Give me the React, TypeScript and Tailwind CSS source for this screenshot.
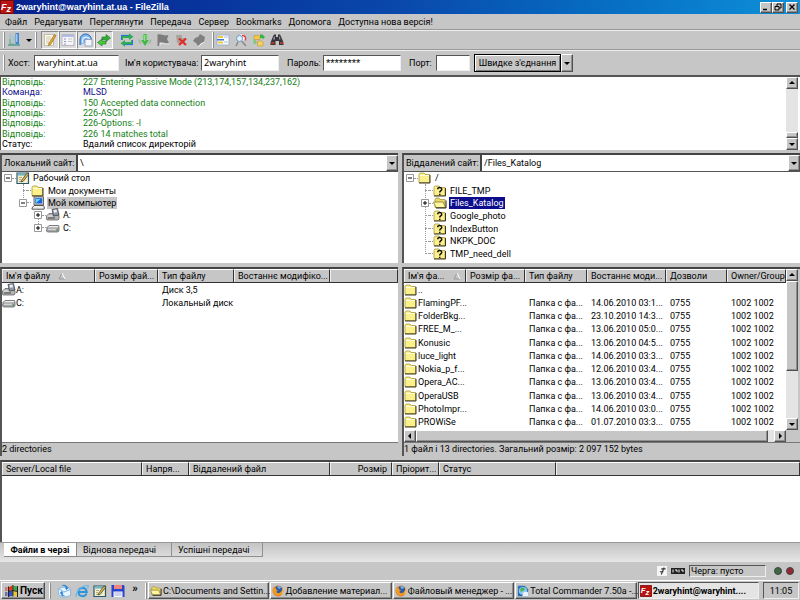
import type { ReactNode } from "react";

const raised =
  "border border-t-white border-l-white border-b-[#505050] border-r-[#505050] shadow-[inset_-1px_-1px_0_#909090] bg-[#c6c6c6]";
const sunken = "border border-t-[#555] border-l-[#555] border-b-[#eee] border-r-[#eee]";
const panel = "border-t-2 border-l-2 border-t-[#444] border-l-[#555]";

/* ---------- icons ---------- */

function Icon({ children, size = "size-3.5" }: { children: ReactNode; size?: string }) {
  return (
    <svg viewBox="0 0 14 14" className={size + " shrink-0"} aria-hidden="true">
      {children}
    </svg>
  );
}

function Folder() {
  return (
    <Icon>
      <path d="M1 3.5 2 2h4l1 1.5h4.5v8H1z" fill="#fbf08c" stroke="#a89838" strokeWidth=".8" />
      <path d="M2 4.5h9" stroke="#fffde0" />
      <path d="M1 12h11V4" fill="none" stroke="#3c3820" strokeWidth="1" />
    </Icon>
  );
}

function OpenFolder() {
  return (
    <Icon>
      <path d="M2 3.5 3 2h3l1 1.5h5v8H2z" fill="#e8d868" stroke="#a89838" strokeWidth=".8" />
      <path d="M.5 6h9.5l2.5 5.5H3z" fill="#fdf6a4" stroke="#8c7c28" strokeWidth=".8" />
      <path d="M3 12h10V4.5" fill="none" stroke="#222" />
    </Icon>
  );
}

function UnknownFolder() {
  return (
    <Icon>
      <path d="M1 3.5 2 2h4l1 1.5h5v8H1z" fill="#fbf08c" stroke="#a89838" strokeWidth=".8" />
      <path d="M1 12h11.5V4" fill="none" stroke="#3c3820" />
      <path d="M4.7 5.2c0-2.4 4.2-2.2 4 .2 0 1.5-2 1.6-2 3" fill="none" stroke="#111" strokeWidth="1.5" />
      <path d="M6 9.7h1.5v1.4H6z" fill="#111" />
    </Icon>
  );
}

function Drive() {
  return (
    <Icon>
      <path d="M1 6.5 3 4.5h9.5L13 6v3.5L12 11H1.5L.5 10z" fill="#a9a9a9" stroke="#555" strokeWidth=".7" />
      <path d="M2 6.3 3.3 5h9L12 6.3z" fill="#eee" />
      <path d="M2 8.3h8" stroke="#ddd" />
      <path d="M10.5 9H12" stroke="#2c8a2c" />
    </Icon>
  );
}

function Floppy35() {
  return (
    <Icon>
      <path d="M.5 8 3 5.5h9L13 8v3l-1 1H1l-.5-1z" fill="#b4b4b4" stroke="#555" strokeWidth=".7" />
      <path d="M1.5 8h5" stroke="#eee" />
      <path d="M2 10h7" stroke="#444" />
      <path d="M6 1.5 11.5.5 13 7 7.5 8z" fill="#8c98a8" stroke="#333" strokeWidth=".7" />
      <path d="m7.5 2 3-.5.5 2.8-3 .5z" fill="#eef" />
    </Icon>
  );
}

function Computer() {
  return (
    <Icon>
      <path d="M3 .8h9.5V9H3z" fill="#d8d8d8" stroke="#444" strokeWidth=".8" />
      <path d="M4.3 2.2h7v5.3h-7z" fill="#1668d8" />
      <path d="M5 3h4.5L5 7z" fill="#69d4ff" />
      <path d="m1 12 2-2.5h9.5l1 2.5-.5 1.2H1z" fill="#eee" stroke="#333" strokeWidth=".8" />
    </Icon>
  );
}

function Desktop() {
  return (
    <Icon>
      <path d="M1 2h11.5v10.5H1z" fill="#f4efcd" stroke="#28566c" strokeWidth="1.2" />
      <path d="M1.6 2.6h10.3v2H1.6z" fill="#6eb6c8" />
      <path d="M3 6.5h3M3 8.5h2M3 10.5h4" stroke="#9a9a70" strokeWidth=".8" />
      <path d="M5.5 9.5 11 2l1.8 1.2L7.5 10 5 11z" fill="#e8b93c" stroke="#333" strokeWidth=".7" />
    </Icon>
  );
}

function FzLogo() {
  return (
    <Icon>
      <path d="M.5.5h13v13H.5z" fill="#b81414" stroke="#7c0808" />
      <text x="1" y="9.5" fill="#fff" fontSize="9" fontWeight="700" fontStyle="italic" fontFamily="Liberation Sans, sans-serif">
        F<tspan dy="2">z</tspan>
      </text>
    </Icon>
  );
}

function SiteManager() {
  return (
    <Icon>
      <path d="M2 1h2.5v9H2zM5.5 3H8v7H5.5z" fill="#a8c4cc" />
      <path d="M8.5 0H12v11H8.5z" fill="#3f83cf" />
      <path d="M9.2 1h1.2v8H9.2z" fill="#b4dcfa" />
      <path d="M1 12h12" stroke="#4c9c90" strokeWidth="1.5" />
      <path d="M3 6v5h4" stroke="#72a87c" fill="none" />
    </Icon>
  );
}

function LogToggle() {
  return (
    <Icon>
      <path d="M1.5 1.5h9v11h-9z" fill="#fffce8" stroke="#b4b096" strokeWidth=".8" />
      <path d="M3 4h5M3 6h5M3 8h3M3 10h3" stroke="#b0b0a0" strokeWidth=".7" />
      <path d="m6 10 5.5-8.5 1.5 1L8 11l-2.5 1.5z" fill="#e9a92c" stroke="#8c6018" strokeWidth=".6" />
    </Icon>
  );
}

function TreeToggle() {
  return (
    <Icon>
      <path d="M1 1.5h12v11H1z" fill="#f6f6fa" stroke="#a8a8b4" strokeWidth=".8" />
      <path d="M1 2h12v2H1z" fill="#b4bce4" />
      <path d="M3 6h2M3 8.5h2M3 11h2" stroke="#8c94b4" />
      <path d="M7 6h4M7 8.5h4" stroke="#c4c4cc" />
    </Icon>
  );
}

function RemoteToggle() {
  return (
    <Icon>
      <path d="M1 12V7c0-8 11-8 11.5 0" fill="#7cb4ec" stroke="#2860b0" />
      <path d="M3.5 10V7c.5-3 5-4 7-1" fill="none" stroke="#d4ecff" strokeWidth="1.5" />
      <path d="M6 6.5h7V13H6z" fill="#f2f4fa" stroke="#8898b8" strokeWidth=".8" />
    </Icon>
  );
}

function QueueToggle() {
  return (
    <Icon>
      <path d="M5 4h4V1.5L13.5 5 9 8.5v-2H5z" fill="#30b034" stroke="#187020" strokeWidth=".6" />
      <path d="M9 8H5V6L.5 9.5 5 13v-2h4z" fill="#4cc83c" stroke="#187020" strokeWidth=".6" />
    </Icon>
  );
}

function Refresh() {
  return (
    <Icon>
      <path d="M1 2h8V.3l4.5 3.4L9 7V5H3v2H1z" fill="#2cae52" />
      <path d="M13 12H5v1.7L.5 10.3 5 7v2h6V7h2z" fill="#2cae52" />
      <path d="M1 2.4h8M1.5 2v5M13 11.6H5M12.5 12V7" stroke="#2874dc" fill="none" />
    </Icon>
  );
}

function ProcessQueue() {
  return (
    <Icon>
      <path d="M3.5 2 5 1v5H3zM9 1l1.5 1L11 6H9z" fill="#a4d4a4" />
      <path d="M5.5 1h3v6H11l-4 6-4-6h2.5z" fill="#44b844" />
      <path d="M.8 5.5 4 12l-3-3zM13.2 5.5 10 12l3-3z" fill="#88b488" />
      <path d="M6.3 2h1v6h-1z" fill="#b4ecac" />
    </Icon>
  );
}

function Flag() {
  return (
    <Icon>
      <path d="M1.5 1.5c4-1 6 2 11 .5L11 6l2 4c-4 1.5-6-1.5-9.5-.5V13h-2z" fill="#7c7c7c" />
      <path d="M4 13v-2.5c3-1 6 1.5 9.5.2" stroke="#eee" fill="none" strokeWidth=".8" />
    </Icon>
  );
}

function Disconnect() {
  return (
    <Icon>
      <path d="M2 2h6v3h3v5H3z" fill="#a8a49c" />
      <path d="m5 5.5 7 6.5M12 5.5 5 12" stroke="#e22c2c" strokeWidth="2.3" />
    </Icon>
  );
}

function Reconnect() {
  return (
    <Icon>
      <path d="M8 1 13 4l-1 5-3 1-3 3-2-3-3-2 2-3 3-1z" fill="#808080" />
      <path d="M12.5 9 9 11l-2.5 3" stroke="#eee" fill="none" />
    </Icon>
  );
}

function Filter() {
  return (
    <Icon>
      <path d="M1 2h12v10H1z" fill="#fbfbfb" stroke="#90a8cc" strokeWidth=".8" />
      <path d="M2 3h5v2H2zM2 8.5h5v2H2z" fill="#f3c93c" />
      <path d="M1 6h7v1.5H1z" fill="#3c78d4" />
      <path d="M8 4h4M8 9h4" stroke="#a4c4ec" />
    </Icon>
  );
}

function Compare() {
  return (
    <Icon>
      <path d="M5 1h5l2 3v4H5z" fill="#f2f2f8" stroke="#a8a8b0" strokeWidth=".6" />
      <circle cx="5.5" cy="5.5" r="3" fill="#e2f0fc" stroke="#6898c0" />
      <path d="M8 8.5 12 13M4 9l-2 4" stroke="#888" strokeWidth="1.5" />
      <path d="M8 2.5c4 0 4 3 3 5" fill="none" stroke="#dc3a3a" strokeWidth="1.3" />
    </Icon>
  );
}

function SyncBrowse() {
  return (
    <Icon>
      <path d="M2 2.5h5l1 1v3H2z" fill="#f4c848" stroke="#b88820" strokeWidth=".5" />
      <path d="M5.5 8H10l1 1v4H5.5z" fill="#f4d060" stroke="#b88820" strokeWidth=".5" />
      <path d="M8 1.5h2.5L13 4l-2.5 2.5V5H8z" fill="#34b440" />
      <path d="M1.5 6.5H4V9h1.2L3 11.5.5 9h1z" fill="#7cc884" />
    </Icon>
  );
}

function Binoculars() {
  return (
    <Icon>
      <path d="M4 1.5h2V4h2V1.5h2l1 2 2.5 6V12H9V8H5.5v4H.5V9.5L3 3.5z" fill="#383438" />
      <path d="M1.3 9h3v2h-3zM10 9h3v2h-3z" fill="#b03c30" />
      <path d="M4 3.5h1v3H3zM9 3.5h1l.5 3H9z" fill="#8890a8" />
    </Icon>
  );
}

function WindowsFlag() {
  return (
    <Icon>
      <path d="m5 3 3.5-1.5V6L5 7z" fill="#e03c24" />
      <path d="m9.2 1.8 4.3.7V7l-4.3-1z" fill="#3ca43c" />
      <path d="M5 7.7 8.5 7v5l-3.5.5z" fill="#2c50d0" />
      <path d="m9.2 7 4.3.7v4.8L9.2 12z" fill="#ecc62c" />
      <path d="M4.5 2.5V13M8.9 1v11.5M13.5 2v11M4.5 7.4l4.4-.8 4.6.8" stroke="#111" strokeWidth=".9" fill="none" />
      <path d="M1 4h2.5M1 6h2.5" stroke="#c33" strokeWidth="1.2" />
      <path d="M1 9h2.5M1 11h2.5" stroke="#228" strokeWidth="1.2" />
    </Icon>
  );
}

function Firefox() {
  return (
    <Icon>
      <circle cx="7" cy="7" r="6.3" fill="#e4701c" />
      <circle cx="7.5" cy="5.8" r="4.3" fill="#2c58a8" />
      <path d="M6 2c2-1 4 0 5 1L8 5z" fill="#6cb4e4" />
      <path d="M1 3l1.5 1 2-1L5 5.5l2 .8L5 8c1 2.5 5 2 6.5-2C13 11 7 14 3.5 11.5 1 9.5.5 6 1 3z" fill="#f09a24" />
      <path d="M12 3.5c2 3 1 7-2 9 2-3 2.500-6 2-9z" fill="#f8d448" />
    </Icon>
  );
}

function TotalCommander() {
  return (
    <Icon>
      <path d="M1 1h8l4 4v8H1z" fill="#2c74c0" />
      <circle cx="7" cy="7" r="4.8" fill="#8cc8ec" />
      <path d="M4 4c2-2 5-1 5 1L7 7 4 8z" fill="#48b450" />
      <path d="M6 12c0-4 6-5 7-3v4H6z" fill="#e8f4ff" />
      <path d="M2 10c2 3 4 2 5 1" stroke="#184c88" fill="none" />
    </Icon>
  );
}

function OutlookIcon() {
  return (
    <Icon>
      <path d="m1.5 4.5 8-2 4 3v6l-7 2-5-3z" fill="#e8f4ff" stroke="#78b4e4" strokeWidth=".8" />
      <path d="m1.5 4.500 5.500 3.500 6.500-2.500" fill="none" stroke="#78b4e4" />
      <path d="M4 1.500c3-1.500 6-.5 6.500 2H12L9.500 6 7.500 3.500H9C8 2 6 1.500 4 1.500z" fill="#2c84d4" />
      <path d="M9 12c-3 1-5 0-5-2.500H2.500L4.500 7l2.200 2.500H5.500C5.500 11 7 12 9 12z" fill="#2c84d4" />
    </Icon>
  );
}

function ExplorerIcon() {
  return (
    <Icon>
      <path d="M11.5 9.5c-1.5 4-8 3.5-8-1.5s7.5-5.5 8.2 0H4" fill="none" stroke="#2c94dc" strokeWidth="2" />
      <path d="M1.5 13C-.5 9 6 1.5 13 1.5c.5 1 .2 2-.5 3" fill="none" stroke="#64b8ec" strokeWidth="1.1" />
    </Icon>
  );
}

function SaveIcon() {
  return (
    <Icon>
      <path d="M.5 1h12l1 1v11H.5z" fill="#2844c8" />
      <path d="M3 1h8v4H3z" fill="#f08484" />
      <path d="M2.5 7.5h9V13h-9z" fill="#f8f8ff" />
      <path d="M3.5 9h7M3.5 11h7" stroke="#8c98d8" strokeWidth=".8" />
    </Icon>
  );
}

function Triangle({ dir = "down" }: { dir?: "up" | "down" | "left" | "right" }) {
  const d = {
    up: "M1 5h6L4 2z",
    down: "M1 3h6L4 6z",
    left: "M5 1v6L2 4z",
    right: "M3 1v6l3-3z",
  }[dir];
  return (
    <svg viewBox="0 0 8 8" className="size-2" aria-hidden="true">
      <path d={d} fill="#000" />
    </svg>
  );
}

/* ---------- small controls ---------- */

function Grip() {
  return <span className="h-4 w-0.5 shrink-0 border-l border-white bg-[#8c8c8c]" />;
}

function ArrowButton({ dir, label }: { dir: "up" | "down" | "left" | "right"; label: string }) {
  return (
    <button aria-label={label} className={"flex size-3 shrink-0 items-center justify-center " + raised}>
      <Triangle dir={dir} />
    </button>
  );
}

function ToolButton({ label, pressed, children }: { label: string; pressed?: boolean; children: ReactNode }) {
  return (
    <button
      aria-label={label}
      className={
        pressed
          ? "flex h-[18px] w-[18px] items-center justify-center border border-t-[#888] border-l-[#888] border-b-white border-r-white bg-[#dcdcdc]"
          : "flex h-[18px] w-[18px] items-center justify-center"
      }
    >
      {children}
    </button>
  );
}

function SitePath({ id, label, path, labelWidth }: { id: string; label: string; path: string; labelWidth: string }) {
  return (
    <div className="flex h-[17px] shrink-0 items-stretch border-b border-[#555]">
      <label htmlFor={id} className={"flex items-center border-r border-[#444] pl-0.5 whitespace-nowrap " + labelWidth}>
        {label}
      </label>
      <div className="relative flex flex-1 items-stretch border-l border-[#444] bg-white">
        <select id={id} className="w-full appearance-none bg-white pl-0.5 pr-3 outline-none">
          <option>{path}</option>
        </select>
        <span className={"pointer-events-none absolute inset-y-0 right-0 flex w-3 items-center justify-center " + raised}>
          <Triangle />
        </span>
      </div>
    </div>
  );
}

function Expander({ open }: { open: boolean }) {
  return (
    <svg viewBox="0 0 8 8" className="size-2 shrink-0" aria-hidden="true">
      <path d="M.5.5h7v7h-7z" fill="#fff" stroke="#999" />
      <path d={open ? "M2 4h4" : "M2 4h4M4 2v4"} stroke="#000" />
    </svg>
  );
}

function TreeRow({ indent, state, icon, children, mark = "" }: { indent: string; state?: "open" | "closed"; icon: ReactNode; children: ReactNode; mark?: string }) {
  return (
    <li className={"relative flex items-center " + indent}>
      {state ? <Expander open={state === "open"} /> : <span className="ml-1 w-1 shrink-0 border-t border-dotted border-[#999]" />}
      <span className="w-1 shrink-0 border-t border-dotted border-[#999]" />
      {icon}
      <span className={"ml-0.5 px-px leading-3 " + mark}>{children}</span>
    </li>
  );
}

const th =
  "h-3.5 border-r border-b border-[#333] border-t border-t-white bg-[#c6c6c6] p-0 pl-1 text-left font-normal whitespace-nowrap shadow-[inset_1px_0_0_#eee]";

function SortMark() {
  return (
    <svg viewBox="0 0 8 8" className="inline size-2" aria-hidden="true">
      <path d="M4 1 1 7h6" fill="none" stroke="#999" />
      <path d="m4 1 3 6" stroke="#fff" />
    </svg>
  );
}

/* ---------- data ---------- */

const menu = ["Файл", "Редагувати", "Переглянути", "Передача", "Сервер", "Bookmarks", "Допомога", "Доступна нова версія!"];

const log = [
  { kind: "Відповідь:", text: "227 Entering Passive Mode (213,174,157,134,237,162)", color: "text-[#148214]" },
  { kind: "Команда:", text: "MLSD", color: "text-[#10108c]" },
  { kind: "Відповідь:", text: "150 Accepted data connection", color: "text-[#148214]" },
  { kind: "Відповідь:", text: "226-ASCII", color: "text-[#148214]" },
  { kind: "Відповідь:", text: "226-Options: -l", color: "text-[#148214]" },
  { kind: "Відповідь:", text: "226 14 matches total", color: "text-[#148214]" },
  { kind: "Статус:", text: "Вдалий список директорій", color: "text-black" },
];

const files = [
  ["FlamingPF...", "14.06.2010 03:1..."],
  ["FolderBkg...", "23.10.2010 14:3..."],
  ["FREE_M_...", "13.06.2010 05:0..."],
  ["Konusic", "13.06.2010 04:5..."],
  ["luce_light", "14.06.2010 03:3..."],
  ["Nokia_p_f...", "12.06.2010 03:4..."],
  ["Opera_AC...", "13.06.2010 03:4..."],
  ["OperaUSB", "13.06.2010 03:4..."],
  ["PhotoImpr...", "14.06.2010 03:0..."],
  ["PROWiSe", "01.07.2010 03:3..."],
];

const tasks = [
  { icon: <OpenFolder />, text: "C:\\Documents and Settin..." },
  { icon: <Firefox />, text: "Добавление материал..." },
  { icon: <Firefox />, text: "Файловый менеджер - ..." },
  { icon: <TotalCommander />, text: "Total Commander 7.50a -..." },
];

/* ---------- window parts ---------- */

function TitleBar() {
  return (
    <header className="flex h-3.5 shrink-0 items-center gap-0.5 bg-gradient-to-r from-[#08208c] via-[#0a48ac] to-[#1090d8] pr-0.5 text-white">
      <FzLogo />
      <h1 className="flex-1 font-[Liberation_Sans] text-[9px] font-bold">2waryhint@waryhint.at.ua - FileZilla</h1>
      <div className="flex text-black">
        <button aria-label="Minimize" className={"flex h-[11px] w-3 items-center justify-center " + raised}>
          <svg viewBox="0 0 8 8" className="size-2"><path d="M1 6.5h4" stroke="#000" strokeWidth="1.5" /></svg>
        </button>
        <button aria-label="Restore" className={"mr-0.5 flex h-[11px] w-3 items-center justify-center " + raised}>
          <svg viewBox="0 0 8 8" className="size-2"><path d="M3 3V1h4v4H5M1 3.5h4V7H1z" fill="none" stroke="#000" /></svg>
        </button>
        <button aria-label="Close" className={"flex h-[11px] w-3 items-center justify-center " + raised}>
          <svg viewBox="0 0 8 8" className="size-2"><path d="m1.5 1.5 5 5M6.5 1.5l-5 5" stroke="#000" strokeWidth="1.3" /></svg>
        </button>
      </div>
    </header>
  );
}

function Toolbar() {
  return (
    <div className="flex h-5 shrink-0 items-center border-b border-[#999] pl-[3px] shadow-[0_1px_0_#eee]">
      <Grip />
      <ToolButton label="Site Manager"><SiteManager /></ToolButton>
      <button aria-label="Sites" className="flex w-3 justify-center"><Triangle /></button>
      <Grip />
      <div className="ml-1 flex">
        <ToolButton label="Log" pressed><LogToggle /></ToolButton>
        <ToolButton label="Local tree" pressed><TreeToggle /></ToolButton>
        <ToolButton label="Remote tree" pressed><RemoteToggle /></ToolButton>
        <ToolButton label="Queue" pressed><QueueToggle /></ToolButton>
      </div>
      <div className="mr-1 ml-[5px] flex">
        <ToolButton label="Refresh"><Refresh /></ToolButton>
        <ToolButton label="Process queue"><ProcessQueue /></ToolButton>
        <ToolButton label="Cancel"><Flag /></ToolButton>
        <ToolButton label="Disconnect"><Disconnect /></ToolButton>
        <ToolButton label="Reconnect"><Reconnect /></ToolButton>
      </div>
      <Grip />
      <ToolButton label="Filter"><Filter /></ToolButton>
      <ToolButton label="Compare"><Compare /></ToolButton>
      <ToolButton label="Synchronized browsing"><SyncBrowse /></ToolButton>
      <ToolButton label="Search"><Binoculars /></ToolButton>
    </div>
  );
}

function QuickConnect() {
  const field = "h-4 bg-white px-0.5 outline-none " + sunken;
  return (
    <form className="flex h-[25px] shrink-0 items-center pl-[3px]" onSubmit={(e) => e.preventDefault()}>
      <Grip />
      <label htmlFor="host" className="ml-[3px] w-[26px]">Хост:</label>
      <input id="host" defaultValue="waryhint.at.ua" className={"w-[85px] font-[Noto_Sans] " + field} />
      <label htmlFor="user" className="ml-1.5 w-[76px] whitespace-nowrap">Ім'я користувача:</label>
      <input id="user" defaultValue="2waryhint" className={"w-[78px] font-[Noto_Sans] " + field} />
      <label htmlFor="pass" className="ml-2 w-9">Пароль:</label>
      <input id="pass" defaultValue="********" className={"w-[78px] font-[Liberation_Sans] text-[11px] " + field} />
      <label htmlFor="port" className="ml-2 w-[27px]">Порт:</label>
      <input id="port" className={"w-[34px] " + field} />
      <button className="ml-1 h-[18px] w-[87px] border border-black shadow-[inset_1px_1px_0_#fff,inset_-1px_-1px_0_#777]">
        Швидке з'єднання
      </button>
      <button aria-label="Історія" className={"flex h-[18px] w-3 items-center justify-center " + raised}>
        <Triangle />
      </button>
    </form>
  );
}

function Log() {
  return (
    <section className="flex h-[75px] shrink-0 border-t-2 border-l border-[#555] bg-white">
      <ul className="grid h-[72px] flex-1 auto-rows-fr">
        {log.map((row) => (
          <li key={row.text} className={"flex items-center pl-px leading-[10px] " + row.color}>
            <span className="w-[81px]">{row.kind}</span>
            <span>{row.text}</span>
          </li>
        ))}
      </ul>
      <div className="mr-0.5 flex w-3 flex-col bg-[#e4e4e4]">
        <ArrowButton dir="up" label="Scroll up" />
        <span className="flex-1" />
        <span className={"h-1.5 " + raised} />
        <ArrowButton dir="down" label="Scroll down" />
      </div>
    </section>
  );
}

function LocalPane() {
  return (
    <div className="flex min-w-0 flex-1 flex-col gap-1">
      <section className={"flex h-[110px] shrink-0 flex-col " + panel}>
        <SitePath id="local" label="Локальний сайт:" path="\" labelWidth="w-[75px]" />
        <div className="flex-1 bg-white">
          <ul className="relative grid h-[62px] auto-rows-fr">
            <li aria-hidden="true" className="absolute top-3 left-[21px] h-5 border-l border-dotted border-[#999]" />
            <li aria-hidden="true" className="absolute top-9 left-9 h-5 border-l border-dotted border-[#999]" />
            <TreeRow indent="pl-0.5" state="open" icon={<Desktop />}>Рабочий стол</TreeRow>
            <TreeRow indent="pl-[17px]" icon={<Folder />}>Мои документы</TreeRow>
            <TreeRow indent="pl-[17px]" state="open" icon={<Computer />} mark="bg-[#c6c6c6]">Мой компьютер</TreeRow>
            <TreeRow indent="pl-8" state="closed" icon={<Floppy35 />}>A:</TreeRow>
            <TreeRow indent="pl-8" state="closed" icon={<Drive />}>C:</TreeRow>
          </ul>
        </div>
      </section>
      <section className={"flex min-h-0 flex-1 flex-col " + panel}>
        <div className="min-h-0 flex-1 overflow-hidden bg-white">
          <table className="w-full table-fixed border-separate border-spacing-0">
            <colgroup>
              <col className="w-[93px]" />
              <col className="w-[63px]" />
              <col className="w-[76px]" />
              <col className="w-[96px]" />
              <col />
            </colgroup>
            <thead>
              <tr>
                <th className={th}>
                  <span className="flex items-center gap-2">Ім'я файлу<SortMark /></span>
                </th>
                <th className={th}>Розмір фай...</th>
                <th className={th}>Тип файлу</th>
                <th className={th}>Востаннє модифіко...</th>
                <th className={th} aria-label="Інше" />
              </tr>
            </thead>
            <tbody>
              <tr className="h-[13px]">
                <td className="p-0"><span className="flex h-[13px] items-center"><Floppy35 />A:</span></td>
                <td className="p-0" />
                <td className="p-0 pl-1">Диск 3,5</td>
              </tr>
              <tr className="h-[13px]">
                <td className="p-0"><span className="flex h-[13px] items-center"><Drive />C:</span></td>
                <td className="p-0" />
                <td className="p-0 pl-1">Локальный диск</td>
              </tr>
            </tbody>
          </table>
        </div>
        <p className="h-3.5 shrink-0 border-t border-[#777] leading-3">2 directories</p>
      </section>
    </div>
  );
}

function RemotePane() {
  const folders = ["Google_photo", "IndexButton", "NKPK_DOC", "TMP_need_dell"];
  return (
    <div className="flex min-w-0 flex-1 flex-col gap-1">
      <section className={"flex h-[110px] shrink-0 flex-col " + panel}>
        <SitePath id="remote" label="Віддалений сайт:" path="/Files_Katalog" labelWidth="w-[77px]" />
        <div className="flex-1 bg-white">
          <ul className="relative grid h-[88px] auto-rows-fr">
            <li aria-hidden="true" className="absolute top-3 left-[21px] h-[70px] border-l border-dotted border-[#999]" />
            <TreeRow indent="pl-0.5" state="open" icon={<Folder />}>/</TreeRow>
            <TreeRow indent="pl-[17px]" icon={<UnknownFolder />}>FILE_TMP</TreeRow>
            <TreeRow indent="pl-[17px]" state="closed" icon={<OpenFolder />} mark="bg-[#0c0c8c] text-white">Files_Katalog</TreeRow>
            {folders.map((f) => (
              <TreeRow key={f} indent="pl-[17px]" icon={<UnknownFolder />}>{f}</TreeRow>
            ))}
          </ul>
        </div>
      </section>
      <section className={"flex min-h-0 flex-1 flex-col " + panel}>
        <div className="flex min-h-0 flex-1">
          <div className="flex min-w-0 flex-1 flex-col bg-white">
            <div className="min-h-0 flex-1 overflow-hidden">
              <table className="h-[160px] w-full table-fixed border-separate border-spacing-0">
                <colgroup>
                  <col className="w-[62px]" />
                  <col className="w-[59px]" />
                  <col className="w-[62px]" />
                  <col className="w-[79px]" />
                  <col className="w-[61px]" />
                  <col />
                </colgroup>
                <thead>
                  <tr>
                    <th className={th}>
                      <span className="flex items-center justify-between pr-1">Ім'я фа...<SortMark /></span>
                    </th>
                    <th className={th}>Розмір фа...</th>
                    <th className={th}>Тип файлу</th>
                    <th className={th}>Востаннє моди...</th>
                    <th className={th}>Дозволи</th>
                    <th className={th}>Owner/Group</th>
                  </tr>
                </thead>
                <tbody className="whitespace-nowrap">
                  <tr>
                    <td className="p-0"><span className="flex h-3 items-center"><Folder />..</span></td>
                  </tr>
                  {files.map(([name, date]) => (
                    <tr key={name}>
                      <td className="p-0"><span className="flex h-3 items-center"><Folder />{name}</span></td>
                      <td className="p-0" />
                      <td className="p-0 pl-1">Папка с фа...</td>
                      <td className="p-0 pl-1">{date}</td>
                      <td className="p-0 pl-1">0755</td>
                      <td className="p-0 pl-1">1002 1002</td>
                    </tr>
                  ))}
                </tbody>
              </table>
            </div>
            <div className="flex shrink-0 bg-[#e4e4e4]">
              <ArrowButton dir="left" label="Scroll left" />
              <span className={"mr-1.5 flex-1 " + raised} />
              <ArrowButton dir="right" label="Scroll right" />
            </div>
          </div>
          <div className="mr-0.5 flex w-3 flex-col bg-[#c6c6c6] pb-3">
            <ArrowButton dir="up" label="Scroll up" />
            <span className={"h-[90px] " + raised} />
            <span className="flex-1 bg-[#e4e4e4]" />
            <ArrowButton dir="down" label="Scroll down" />
          </div>
        </div>
        <p className="h-3.5 shrink-0 border-t border-[#777] leading-3">1 файл і 13 directories. Загальний розмір: 2 097 152 bytes</p>
      </section>
    </div>
  );
}

function Queue() {
  return (
    <section className={"h-[82px] shrink-0 bg-white " + panel}>
      <table className="w-full table-fixed border-separate border-spacing-0">
        <colgroup>
          <col className="w-[140px]" />
          <col className="w-[47px]" />
          <col className="w-[141px]" />
          <col className="w-[62px]" />
          <col className="w-[47px]" />
          <col className="w-[117px]" />
          <col />
        </colgroup>
        <thead>
          <tr>
            <th className={th}>Server/Local file</th>
            <th className={th}>Напря...</th>
            <th className={th}>Віддалений файл</th>
            <th className={th}><span className="block pr-1 text-right">Розмір</span></th>
            <th className={th}>Пріорит...</th>
            <th className={th}>Статус</th>
            <th className={th} aria-label="Інше" />
          </tr>
        </thead>
      </table>
    </section>
  );
}

function QueueTabs() {
  const idle = "h-3.5 border-r border-b border-[#909090] pl-1.5 text-left";
  return (
    <div role="tablist" className="flex h-5 shrink-0 items-start border-t border-[#999] bg-gradient-to-b from-[#c4c4c4] to-[#e6e6e6] pl-1">
      <button role="tab" aria-selected="true" className="h-3.5 w-[73px] border-r border-b border-[#888] bg-white font-bold">
        Файли в черзі
      </button>
      <button role="tab" aria-selected="false" className={"w-[95px] " + idle}>Віднова передачі</button>
      <button role="tab" aria-selected="false" className={"w-[91px] " + idle}>Успішні передачі</button>
    </div>
  );
}

function StatusBar() {
  return (
    <footer className="flex flex-1 items-center justify-end gap-1 pr-1.5">
      <Icon size="size-2.5">
        <path d="M0 0h14v14H0z" fill="#f4f4f4" />
        <path d="M10 2 6 12M6 4h6M4 8h5" stroke="#333" strokeWidth="1.5" />
      </Icon>
      <Icon>
        <path d="M0 4h14v6H0z" fill="#222" />
        <path d="M2 5.5v3M4 6h2v2M8 5.5v3M10 6h2v2" stroke="#eee" fill="none" />
      </Icon>
      <span className={"h-3 w-[77px] pl-px leading-[11px] " + sunken}>Черга: пусто</span>
      <span className="ml-1 size-2 rounded-full border border-[#444] bg-[#3a6840]" />
      <span className="size-2 rounded-full border border-[#444] bg-[#942834]" />
    </footer>
  );
}

function Taskbar() {
  const task = "flex h-[17px] min-w-0 flex-1 items-center gap-px pl-px whitespace-nowrap [&>svg]:size-3 ";
  return (
    <nav className="flex h-5 shrink-0 items-center border-t border-white px-px">
      <button className={"flex h-[17px] w-11 items-center gap-0.5 pl-0.5 text-[10px] font-bold " + raised}>
        <WindowsFlag />
        Пуск
      </button>
      <div className="ml-1 flex items-center gap-1">
        <Grip />
        <button aria-label="Outlook" className="ml-0.5"><OutlookIcon /></button>
        <button aria-label="Internet Explorer"><ExplorerIcon /></button>
        <button aria-label="Desktop"><Desktop /></button>
        <button aria-label="Save"><SaveIcon /></button>
        <button className="mb-1 w-3 text-[11px] font-bold">»</button>
        <Grip />
      </div>
      <div className="ml-px flex min-w-0 flex-1 gap-px">
        {tasks.map((t) => (
          <button key={t.text} className={task + raised}>
            {t.icon}
            {t.text}
          </button>
        ))}
        <button className={task + "bg-[#e4e4e4] font-bold " + sunken}>
          <FzLogo />
          2waryhint@waryhint....
        </button>
      </div>
      <time className={"ml-1 h-[17px] w-9 text-center leading-4 " + sunken}>11:05</time>
    </nav>
  );
}

export default function App() {
  return (
    <div className="flex h-screen flex-col overflow-hidden bg-[#c6c6c6] font-[Roboto,sans-serif] text-[9px] leading-3 text-black">
      <TitleBar />
      <nav className="flex h-4 shrink-0 items-center gap-[7px] border-b border-[#999] pl-[5px] shadow-[0_1px_0_#eee]">
        {menu.map((m) => (
          <button key={m}>{m}</button>
        ))}
      </nav>
      <Toolbar />
      <QuickConnect />
      <Log />
      <main className="mt-[3px] flex h-[303px] shrink-0 gap-1">
        <LocalPane />
        <RemotePane />
      </main>
      <div className="h-1 shrink-0" />
      <Queue />
      <QueueTabs />
      <StatusBar />
      <Taskbar />
    </div>
  );
}
